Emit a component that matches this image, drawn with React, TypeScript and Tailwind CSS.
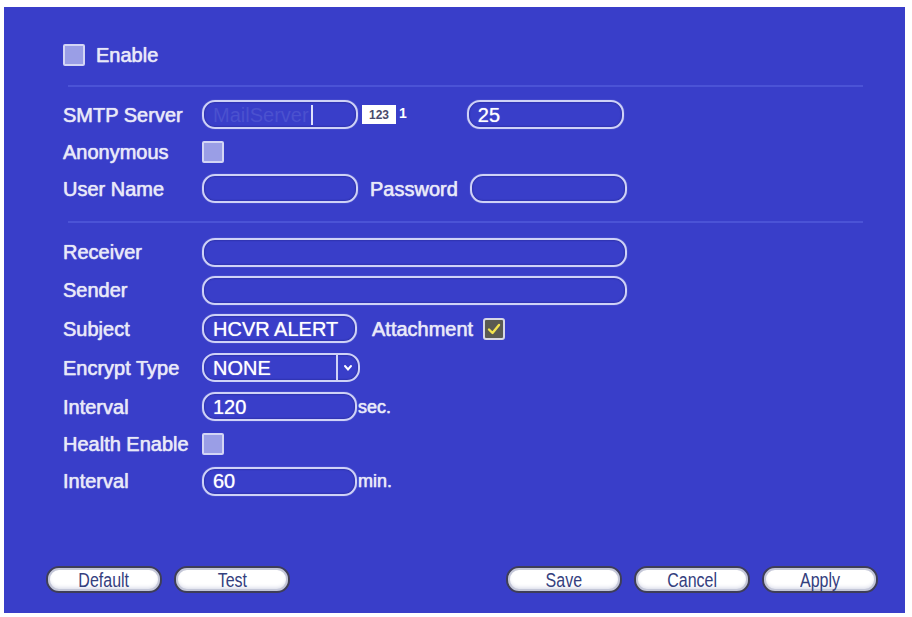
import React from "react";

const font = { fontFamily: '"Liberation Sans", Arial, sans-serif' };

const txt = "[text-shadow:0_0_1px_rgba(255,255,255,0.9)] [-webkit-text-stroke:0.25px_#e8e9f8]";

function Label({ children, w = "w-[139px]" }: { children: React.ReactNode; w?: string }) {
  return (
    <div className={`${w} shrink-0 text-[20px] leading-none text-[#e8e9f8] ${txt}`}>
      {children}
    </div>
  );
}

function Box({ w, children }: { w: string; children?: React.ReactNode }) {
  return (
    <div
      className={`${w} h-[29px] shrink-0 rounded-[13px] border-2 border-[#cfd2f7] flex items-center pl-[9px] text-[20px] leading-none text-white shadow-[inset_0_0_2px_rgba(20,20,90,0.7),0_0_1px_rgba(255,255,255,0.6)] [text-shadow:0_0_1px_rgba(255,255,255,0.8)]`}
    >
      {children}
    </div>
  );
}

function Check() {
  return <div className="w-[22px] h-[22px] shrink-0 border-2 border-[#d3d5f5] bg-[#9a9ee6] rounded-[2px]" />;
}

function Btn({ children }: { children: React.ReactNode }) {
  return (
    <div className="w-[116px] h-[27px] rounded-[13px] border-2 border-[#3e3e58] bg-white shadow-[inset_0_0_0_2px_#c4c7d8,inset_0_-3px_4px_#d3d6e6] flex items-center justify-center">
      <span className="text-[20px] leading-none text-[#34407e] scale-x-[0.8] inline-block">{children}</span>
    </div>
  );
}

export default function App() {
  return (
    <div className="w-[912px] h-[617px] bg-white pt-[7px] pl-[4px] pr-[7px] pb-[4px]" style={font}>
      <div className="w-full h-full bg-[#393ec9] flex flex-col pl-[59px]">
        {/* Enable */}
        <div className="mt-[28px] h-[40px] flex items-center">
          <Check />
          <div className={`ml-[11px] text-[20px] leading-none text-[#e8e9f8] ${txt}`}>Enable</div>
        </div>
        <div className="mt-[10px] h-[2px] w-[795px] ml-[5px] bg-[#4b53d6]" />

        {/* SMTP */}
        <div className="mt-[9px] h-[37px] flex items-center">
          <Label>SMTP Server</Label>
          <Box w="w-[156px]">
            <span className="text-[#4b51cf] [text-shadow:none]">MailServer</span>
            <span className="ml-[2px] w-[2px] h-[20px] bg-[#dfe1fb]" />
          </Box>
          <div className="ml-[4px] w-[34px] h-[19px] bg-white flex items-center justify-center text-[12px] font-bold text-[#4a4a6a] leading-none">
            123
          </div>
          <div className="ml-[3px] text-[14px] font-bold text-white leading-none self-start mt-[10px]">1</div>
          <div className="ml-[60px]">
            <Box w="w-[157px]">25</Box>
          </div>
        </div>

        {/* Anonymous */}
        <div className="h-[37px] flex items-center">
          <Label>Anonymous</Label>
          <Check />
        </div>

        {/* User */}
        <div className="h-[37px] flex items-center">
          <Label>User Name</Label>
          <Box w="w-[156px]" />
          <div className="ml-[12px]">
            <Label w="w-[100px]">Password</Label>
          </div>
          <Box w="w-[157px]" />
        </div>

        <div className="mt-[14px] h-[2px] w-[795px] ml-[5px] bg-[#4b53d6]" />

        {/* Receiver */}
        <div className="mt-[10px] h-[38px] flex items-center">
          <Label>Receiver</Label>
          <Box w="w-[425px]" />
        </div>
        <div className="h-[38px] flex items-center">
          <Label>Sender</Label>
          <Box w="w-[425px]" />
        </div>
        <div className="h-[39px] flex items-center">
          <Label>Subject</Label>
          <Box w="w-[155px]">HCVR ALERT</Box>
          <div className={`ml-[15px] text-[20px] leading-none text-[#e8e9f8] ${txt}`}>Attachment</div>
          <div className="ml-[10px] w-[22px] h-[22px] border-2 border-[#d7d7e4] bg-[#5a5a52] rounded-[3px] flex items-center justify-center">
            <svg width="14" height="12" viewBox="0 0 14 12">
              <path d="M2 6.5 L5.5 10 L12 2" stroke="#f3e44e" strokeWidth="2.4" fill="none" strokeLinecap="round" strokeLinejoin="round" />
            </svg>
          </div>
        </div>
        <div className="h-[39px] flex items-center">
          <Label>Encrypt Type</Label>
          <div className="w-[158px] h-[29px] rounded-[13px] border-2 border-[#cfd2f7] flex items-center text-[20px] leading-none text-white shadow-[inset_0_0_2px_rgba(20,20,90,0.7)] [text-shadow:0_0_1px_rgba(255,255,255,0.8)]">
            <div className="flex-1 pl-[9px]">NONE</div>
            <div className="w-[2px] h-full bg-[#cfd2f7]" />
            <div className="w-[20px] flex items-center justify-center">
              <svg width="10" height="8" viewBox="0 0 10 8">
                <path d="M2 2 L5 5.5 L8 2" stroke="#ffffff" strokeWidth="2" fill="none" strokeLinecap="round" />
              </svg>
            </div>
          </div>
        </div>
        <div className="h-[39px] flex items-center">
          <Label>Interval</Label>
          <Box w="w-[155px]">120</Box>
          <div className={`ml-[1px] text-[18px] leading-none text-[#e8e9f8] ${txt}`}>sec.</div>
        </div>
        <div className="h-[36px] flex items-center">
          <Label>Health Enable</Label>
          <Check />
        </div>
        <div className="h-[38px] flex items-center">
          <Label>Interval</Label>
          <Box w="w-[155px]">60</Box>
          <div className={`ml-[1px] text-[18px] leading-none text-[#e8e9f8] ${txt}`}>min.</div>
        </div>

        {/* Buttons */}
        <div className="mt-auto mb-[20px] flex items-center pr-[27px] -ml-[17px]">
          <div className="flex gap-[12px]">
            <Btn>Default</Btn>
            <Btn>Test</Btn>
          </div>
          <div className="ml-auto flex gap-[12px]">
            <Btn>Save</Btn>
            <Btn>Cancel</Btn>
            <Btn>Apply</Btn>
          </div>
        </div>
      </div>
    </div>
  );
}
